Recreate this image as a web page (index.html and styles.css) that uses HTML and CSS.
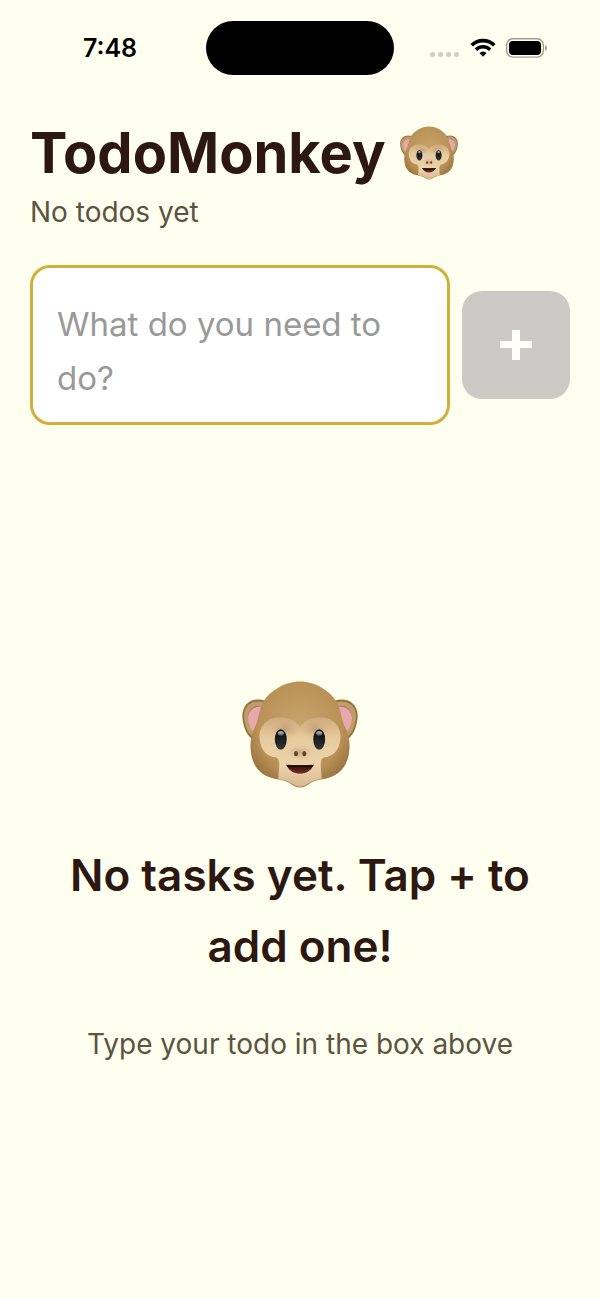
FILE: index.html
```
<!DOCTYPE html>
<html lang="en">

<head>
  <meta charset="UTF-8">
  <meta name="viewport" content="width=device-width, initial-scale=1.0">
  <title>TodoMonkey</title>
  <link rel="stylesheet" href="styles.css">
</head>

<body>
  <!-- Monkey face, used in the title and the empty state -->
  <svg class="sprite" aria-hidden="true">
    <defs>
      <radialGradient id="fur" cx="0.5" cy="0.42" r="0.62">
        <stop offset="0" stop-color="#c8a46c" />
        <stop offset="0.7" stop-color="#b99156" />
        <stop offset="1" stop-color="#94703d" />
      </radialGradient>
      <linearGradient id="skin" x1="0" y1="0" x2="0" y2="1">
        <stop offset="0" stop-color="#d0ab7c" />
        <stop offset="0.3" stop-color="#e6cb9e" />
        <stop offset="0.7" stop-color="#ecd3aa" />
        <stop offset="1" stop-color="#d8b792" />
      </linearGradient>
      <radialGradient id="shade">
        <stop offset="0" stop-color="#a98361" stop-opacity="0.5" />
        <stop offset="1" stop-color="#c9a477" stop-opacity="0" />
      </radialGradient>
      <linearGradient id="eye" x1="0" y1="0" x2="0" y2="1">
        <stop offset="0" stop-color="#090909" />
        <stop offset="0.5" stop-color="#1b1d1e" />
        <stop offset="1" stop-color="#353739" />
      </linearGradient>
      <linearGradient id="shine" x1="0" y1="0" x2="0" y2="1">
        <stop offset="0" stop-color="#d8dada" />
        <stop offset="1" stop-color="#3a3d3e" />
      </linearGradient>
      <linearGradient id="mouth" x1="0" y1="0" x2="0" y2="1">
        <stop offset="0" stop-color="#2c0d08" />
        <stop offset="1" stop-color="#7c3028" />
      </linearGradient>
      <symbol id="monkey" viewBox="47 47 350 322">
        <g id="ear">
          <path d="M118 106 C82 94 49 111 48 151 C48 181 61 211 78 223 L108 190Z" fill="#94733f" />
          <path d="M114 111 C85 101 53 117 53 152 C54 178 64 203 79 215 L106 180Z" fill="#bd9d68" />
          <path d="M110 122 C84 115 64 130 65 158 C67 178 73 192 82 200 L100 175Z" fill="#e7a9ab" />
          <path d="M110 122 C84 115 64 130 65 158 C68 138 78 124 103 124Z" fill="#b07c62" />
        </g>
        <use href="#ear" transform="translate(444 0) scale(-1 1)" />
        <path d="M222 48 C176 48 130 76 110 112 C98 134 98 164 84 190 C72 214 70 244 75 270 C82 306 103 329 137 339 C160 345 181 345 195 358 Q222 378 249 358 C263 345 284 345 307 339 C341 329 362 306 369 270 C374 244 372 214 360 190 C346 164 346 134 334 112 C314 76 268 48 222 48Z" fill="url(#fur)" />
        <path d="M222 185 C207 163 179 154 151 157 C116 162 97 190 100 219 C103 257 123 274 148 277 C166 282 157 314 157 342 C176 345 187 348 197 356 Q222 376 247 356 C257 348 268 345 287 342 C287 314 278 282 296 277 C321 274 341 257 344 219 C347 190 328 162 293 157 C265 154 237 163 222 185Z" fill="url(#skin)" />
        <ellipse cx="176" cy="192" rx="45" ry="30" fill="url(#shade)" />
        <ellipse cx="268" cy="192" rx="45" ry="30" fill="url(#shade)" />
        <ellipse cx="222" cy="263" rx="39" ry="23" fill="url(#shade)" />
        <ellipse cx="164" cy="223" rx="18" ry="31" fill="url(#eye)" />
        <ellipse cx="280" cy="223" rx="18" ry="31" fill="url(#eye)" />
        <ellipse cx="164" cy="205" rx="9" ry="7" fill="url(#shine)" />
        <ellipse cx="280" cy="205" rx="9" ry="7" fill="url(#shine)" />
        <ellipse cx="210" cy="266" rx="6" ry="8" fill="#69411f" />
        <ellipse cx="235" cy="266" rx="6" ry="8" fill="#69411f" />
        <path d="M179 299 Q222 301 265 299 C257 318 240 328 222 328 C204 328 187 318 179 299Z" fill="url(#mouth)" stroke="#f6dfb5" stroke-width="3" />
        <path d="M180 299 Q222 301 264 299 L260 305 Q222 309 184 305Z" fill="#24100a" />
      </symbol>
    </defs>
  </svg>

  <div class="app">
    <div class="status-bar">
      <div class="time">7:48</div>
      <div class="island"></div>
      <div class="status-icons">
        <svg width="30" height="20" viewBox="0 0 30 20" fill="#cfcfc4" aria-hidden="true">
          <rect x="0" y="14" width="5" height="5" rx="2" />
          <rect x="8" y="14" width="5" height="5" rx="2" />
          <rect x="16" y="14" width="5" height="5" rx="2" />
          <rect x="24" y="14" width="5" height="5" rx="2" />
        </svg>
        <svg width="26" height="20" viewBox="0 0 26 20" fill="none" stroke="#000" stroke-width="3.6" aria-hidden="true">
          <path d="M1.7 7.3 C8 1 18 1 24.3 7.3" />
          <path d="M5.9 11.7 C10 7.8 16 7.8 20.1 11.7" />
          <path d="M9.4 15.1 Q13 12 16.6 15.1 L13 18.8Z" fill="#000" stroke="none" />
        </svg>
        <svg width="41" height="20" viewBox="0 0 41 20" aria-hidden="true">
          <rect x="0.7" y="0.7" width="36.6" height="18.4" rx="6" fill="none" stroke="#9d9d96" stroke-width="1.4" />
          <rect x="3" y="3" width="32" height="14" rx="4" fill="#000" />
          <path d="M39 7 Q41 8 41 10 Q41 12 39 13Z" fill="#9d9d96" />
        </svg>
      </div>
    </div>

    <header class="header">
      <h1 class="title">TodoMonkey
        <svg class="title-monkey" role="img" aria-label="Monkey face"><use href="#monkey" /></svg>
      </h1>
      <p class="subtitle">No todos yet</p>
    </header>

    <form class="todo-form">
      <textarea class="todo-input" rows="2" placeholder="What do you need to do?" aria-label="New todo"></textarea>
      <button class="add-button" type="button" aria-label="Add todo" disabled>
        <svg width="32" height="30" viewBox="0 0 32 30" fill="#fffff8" aria-hidden="true">
          <path d="M12 0 H20 V11 H32 V18 H20 V30 H12 V18 H0 V11 H12Z" />
        </svg>
      </button>
    </form>

    <main class="empty-state">
      <svg class="empty-monkey" role="img" aria-label="Monkey face"><use href="#monkey" /></svg>
      <h2 class="empty-title">No tasks yet. Tap + to add one!</h2>
      <p class="empty-hint">Type your todo in the box above</p>
    </main>
  </div>
</body>

</html>
```
FILE: styles.css
```
* {
  box-sizing: border-box;
}

body {
  margin: 0;
  background: #fffff0;
  color: #2c1810;
  font-family: Inter, "Liberation Sans", sans-serif;
}

.sprite {
  position: absolute;
  width: 0;
  height: 0;
}

.app {
  display: flex;
  flex-direction: column;
  min-height: 100vh;
}

/* Status bar */
.status-bar {
  display: grid;
  grid-template-columns: 1fr 188px 1fr;
  align-items: center;
  padding-top: 21px;
}

.time {
  padding-left: 14px;
  color: #000;
  font-size: 25px;
  font-weight: 600;
  text-align: center;
}

.island {
  height: 54px;
  border-radius: 27px;
  background: #000;
}

.status-icons {
  display: flex;
  justify-content: flex-end;
  gap: 10px;
  padding-right: 53px;
}

/* Header */
.header {
  padding: 41px 30px 0;
}

.title {
  display: flex;
  align-items: center;
  gap: 14px;
  margin: 0;
  font-size: 56px;
  font-weight: 700;
  line-height: 74px;
}

.title-monkey {
  width: 58px;
  height: 54px;
}

.subtitle {
  margin: 0;
  color: #5c5340;
  font-size: 28px;
  line-height: 44px;
}

/* New todo */
.todo-form {
  display: flex;
  align-items: center;
  gap: 12px;
  padding: 31px 30px 0;
}

.todo-input {
  flex: 1;
  min-width: 0;
  padding: 29px 24px 17px;
  border: 3px solid #d4af37;
  border-radius: 20px;
  background: #fff;
  color: #2c1810;
  font-family: inherit;
  font-size: 33px;
  line-height: 54px;
  resize: none;
  overflow: hidden;
}

.todo-input::placeholder {
  color: #999;
}

.add-button {
  display: flex;
  align-items: center;
  justify-content: center;
  width: 108px;
  height: 108px;
  padding: 0;
  border: none;
  border-radius: 20px;
  background: #cccac4;
}

/* Empty state */
.empty-state {
  display: flex;
  flex: 1;
  flex-direction: column;
  align-items: center;
  justify-content: center;
  padding: 22px 60px 0;
  text-align: center;
}

.empty-monkey {
  width: 116px;
  height: 107px;
}

.empty-title {
  margin: 52px 0 41px;
  font-size: 44px;
  font-weight: 600;
  line-height: 71px;
}

.empty-hint {
  margin: 0;
  color: #5c5340;
  font-size: 28px;
  line-height: 42px;
}
```
